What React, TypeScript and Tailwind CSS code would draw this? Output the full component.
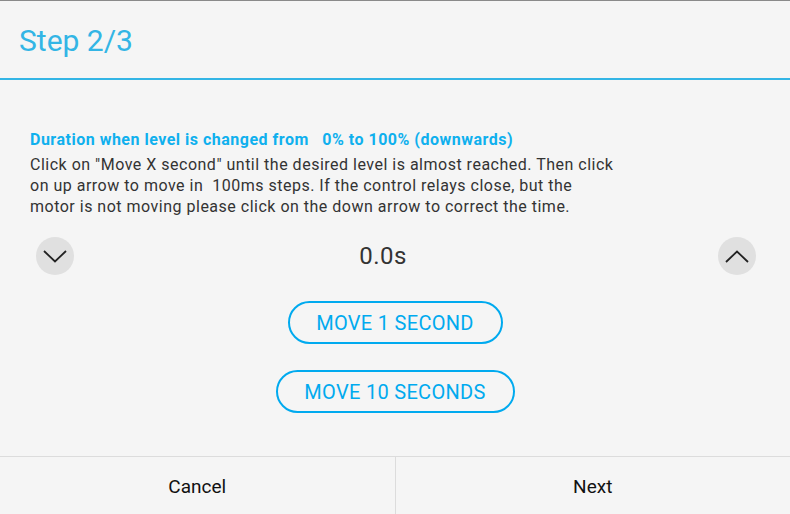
import React from 'react';

const Chevron: React.FC<{ up?: boolean }> = ({ up }) => (
  <svg width="24" height="13" viewBox="0 0 24 13" fill="none" stroke="#222" strokeWidth="1.8">
    {up ? <path d="M1 12 L12 1.5 L23 12" /> : <path d="M1 1 L12 11.5 L23 1" />}
  </svg>
);

const App: React.FC = () => {
  return (
    <div className="w-[790px] h-[514px] bg-[#f5f5f5] flex flex-col font-['Roboto',sans-serif] overflow-hidden">
      <div className="h-px bg-[#8a8a8a]" />
      <div className="h-[79px] flex items-center px-[19px] border-b-2 border-[#33b5e5]">
        <h1 className="text-[30px] text-[#33b5e5] leading-none mt-[3px]">Step 2/3</h1>
      </div>

      <div className="flex-1 flex flex-col px-[30px] pt-[50px]">
        <p className="text-[16px] font-bold text-[#0fb0ee] leading-[19px] tracking-[0.5px]">
          Duration when level is changed from&nbsp;&nbsp; 0% to 100% (downwards)
        </p>
        <p className="text-[16px] text-[#333] leading-[21px] tracking-[0.5px] mt-[5px] w-[586px]">
          Click on "Move X second" until the desired level is almost reached. Then click on up arrow to move in&nbsp; 100ms steps. If the control relays close, but the motor is not moving please click on the down arrow to correct the time.
        </p>

        <div className="flex items-center mt-[20px] ml-[6px] mr-[4px]">
          <button className="w-[38px] h-[38px] rounded-full bg-[#e0e0e0] flex items-center justify-center">
            <Chevron />
          </button>
          <div className="flex-1 flex justify-center pr-[26px]">
            <span className="text-[24px] text-[#333] leading-none tracking-[0.5px]">0.0s</span>
          </div>
          <button className="w-[38px] h-[38px] rounded-full bg-[#e0e0e0] flex items-center justify-center">
            <Chevron up />
          </button>
        </div>

        <div className="flex flex-col items-center gap-[26px] mt-[26px]">
          <button className="w-[215px] h-[43px] rounded-full border-[2.5px] border-[#00aaef] text-[#00aaef] text-[20px] leading-none tracking-[0.3px]">
            MOVE 1 SECOND
          </button>
          <button className="w-[239px] h-[43px] rounded-full border-[2.5px] border-[#00aaef] text-[#00aaef] text-[20px] leading-none tracking-[0.3px]">
            MOVE 10 SECONDS
          </button>
        </div>
      </div>

      <div className="h-[58px] flex border-t border-[#dcdcdc]">
        <button className="flex-1 text-[19px] text-[#111] border-r border-[#dcdcdc] pt-[3px]">Cancel</button>
        <button className="flex-1 text-[19px] text-[#111] pt-[3px]">Next</button>
      </div>
    </div>
  );
};

export default App;
